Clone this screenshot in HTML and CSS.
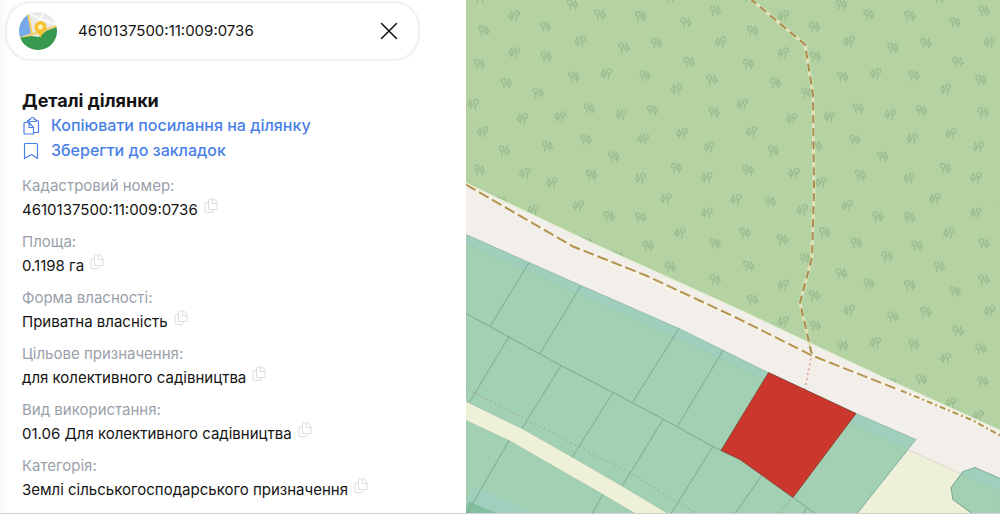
FILE: index.html
```html
<!DOCTYPE html>
<html lang="uk">
<head>
    <meta charset="UTF-8">
    <meta name="viewport" content="width=device-width, initial-scale=1.0">
    <title>Деталі ділянки</title>
    <link rel="stylesheet" href="styles.css">
</head>
<body>
    <svg class="sprite" aria-hidden="true">
        <symbol id="icon-copy" viewBox="0 0 14 16">
            <path d="M4.500 2.500v9h8.500v-6a4.500 4.500 0 0 0-4.500-4.500h-3a1 1 0 0 0-1 1.500M8.500 1v4.500h4.500M4.500 4.500h-2a1.500 1.500 0 0 0-1.500 1.500v7a1.500 1.500 0 0 0 1.500 1.500h5a1.500 1.500 0 0 0 1.500-1.500v-1.500"/>
        </symbol>
    </svg>

    <div class="page">
        <aside class="panel">
            <form class="search">
                <svg class="logo" viewBox="0 0 38 38" aria-hidden="true">
                    <clipPath id="logoClip"><circle cx="19" cy="19" r="19"/></clipPath>
                    <g clip-path="url(#logoClip)">
                        <rect width="38" height="38" fill="#e9e9e9"/>
                        <path d="M12 3l26 10M17 14L25 0" stroke="#fafafa" stroke-width="2"/>
                        <path d="M0 0h9l4 21-13 5z" fill="#76aae8"/>
                        <path d="M9 1l4 21M0 27l14-5 24-8" fill="none" stroke="#f5cf66" stroke-width="2"/>
                        <path d="M0 26l12-2 8 1 7-6 11-4v23H0z" fill="#36994d"/>
                        <path d="M21.500 26c-1-5-6-6-6-11a6 6 0 0 1 12 0c0 5-5 6-6 11z" fill="#f8c22e"/>
                        <circle cx="21.500" cy="15" r="2.500" fill="#fff2bf"/>
                    </g>
                </svg>
                <input class="search-input" type="text" aria-label="Кадастровий номер" value="4610137500:11:009:0736">
                <button class="clear" type="reset" aria-label="Очистити">
                    <svg viewBox="0 0 18 18"><path d="M1.500 1.500l15 15M16.500 1.500l-15 15"/></svg>
                </button>
            </form>

            <div class="details">
                <h1>Деталі ділянки</h1>
                <a class="action" href="#copy">
                    <svg viewBox="0 0 18 20"><path d="M7 3.500h1.500a2 2 0 0 1 4 0h1.500v2h-7zM7 4.500h-1.500v2M14 4.500h1.500a1 1 0 0 1 1 1v11h-5M3 6.500h4l4.500 5v6.500h-8.500a1 1 0 0 1-1-1v-9.500a1 1 0 0 1 1-1zM7 6.500v5h4.500"/></svg>
                    <span>Копіювати посилання на ділянку</span>
                </a>
                <a class="action" href="#save">
                    <svg viewBox="0 0 18 20"><path d="M3.500 2.500h11a1 1 0 0 1 1 1v14l-6-4-7 4v-14a1 1 0 0 1 1-1z"/></svg>
                    <span>Зберегти до закладок</span>
                </a>

                <dl class="fields">
                    <div>
                        <dt>Кадастровий номер:</dt>
                        <dd>4610137500:11:009:0736 <button class="copy" aria-label="Копіювати"><svg><use href="#icon-copy"/></svg></button></dd>
                    </div>
                    <div>
                        <dt>Площа:</dt>
                        <dd>0.1198 га <button class="copy" aria-label="Копіювати"><svg><use href="#icon-copy"/></svg></button></dd>
                    </div>
                    <div>
                        <dt>Форма власності:</dt>
                        <dd>Приватна власність <button class="copy" aria-label="Копіювати"><svg><use href="#icon-copy"/></svg></button></dd>
                    </div>
                    <div>
                        <dt>Цільове призначення:</dt>
                        <dd>для колективного садівництва <button class="copy" aria-label="Копіювати"><svg><use href="#icon-copy"/></svg></button></dd>
                    </div>
                    <div>
                        <dt>Вид використання:</dt>
                        <dd>01.06 Для колективного садівництва <button class="copy" aria-label="Копіювати"><svg><use href="#icon-copy"/></svg></button></dd>
                    </div>
                    <div>
                        <dt>Категорія:</dt>
                        <dd>Землі сільськогосподарського призначення <button class="copy" aria-label="Копіювати"><svg><use href="#icon-copy"/></svg></button></dd>
                    </div>
                </dl>
            </div>
        </aside>

        <main class="map">
            <svg viewBox="0 0 534 514" preserveAspectRatio="xMidYMid slice" role="img" aria-label="Кадастрова карта">
                <defs>
                    <g id="treeA">
                        <circle cx="-9" cy="-7" r="7"/>
                        <path d="M-8 0V16M7 -12l-7 16 7 3 8-3zM8 0v15"/>
                    </g>
                    <g id="treeB">
                        <circle cx="8" cy="-8" r="7"/>
                        <path d="M7 -1L5 17M-9 -12l-7 15 7 4 7-4zM-8 0v14"/>
                    </g>
                    <pattern id="trees" width="269" height="269" patternUnits="userSpaceOnUse" viewBox="0 0 807 807">
                        <g id="treeTile" class="trees"></g>
                    </pattern>
                </defs>

                <!-- land and forest -->
                <rect class="land" width="534" height="514"/>
                <path class="forest" d="M0 0H534V431L421 380 270 309 120 241 0 184z"/>
                <path fill="url(#trees)" d="M0 0H534V431L421 380 270 309 120 241 0 184z"/>
                <path class="forest-edge" d="M0 184L120 241 270 309 421 380 534 431"/>
                <path class="field" d="M444 451L534 492V514H391z"/>
                <path class="field-edge" d="M444 451L534 492"/>

                <!-- parcels -->
                <path class="strip" d="M0 235L63 263 115 286 213 329 302 373 390 414 450 440 391 514H0z"/>
                <path class="parcel" d="M0 244L63 272 213 340 296 379 389 426 442 450 391 514H0z"/>
                <path class="field" d="M0 402L56 429 107 458 157 487 202 514H169L137 495 43 441 0 421z"/>
                <path class="strip" d="M7 487L70 514H0V501z"/>
                <path class="parcel-dark" d="M3 502L32 514H0V508z"/>
                <path class="strip" d="M509 468L497 472 485 488 487 500 506 514H534V479z"/>
                <path class="parcel" d="M496 475L534 492V514H506L487 500 485 488z"/>

                <g class="lines">
                    <path d="M0 235L63 263 115 286 213 329 302 373 390 414 450 440 391 514" opacity=".6"/>
                    <path d="M0 314L24 327 42 337 95 366 147 393 198 420 247 447 255 451"/>
                    <path d="M0 402L56 429 107 458 157 487 202 514M0 421L43 441 137 495 169 514" opacity=".35"/>
                    <path d="M509 468L497 472 485 488 487 500 506 514M509 468L534 479"/>
                    <path d="M63 263L24 327M115 286L74 354M213 329L167 402M257 351L212 426"/>
                    <path d="M43 337L4 402M95 366L56 429M147 393L106 458M197 420L156 487M247 447L205 514"/>
                    <path d="M43 441L1 514M137 495L126 514M295 477L269 514M327 498L349 514M341 508L337 514"/>
                </g>
                <path class="dots" d="M2 390L60 420 163 473 230 514M324 501L312 514"/>
                <path class="selected" d="M302.500 373L390 414 327 498 274 460 255 451z"/>

                <!-- footpaths -->
                <path class="halo" d="M284 -1L339 45 347 95 348 190 346 258 334 303 346 356"/>
                <path class="path path-short" d="M284 -1L339 45 347 95 348 190 346 258 334 303 346 356"/>
                <path class="halo halo-light" d="M0 185L107 247 270 318 346 356 432 390 507 421 534 436"/>
                <path class="path" d="M0 185L107 247 180 276 270 318 346 356 432 390"/>
                <path class="path path-mixed" d="M435 391L507 421 534 436"/>
                <path class="dots dots-pink" d="M345 359L339 389"/>
            </svg>
        </main>
    </div>

    <script>
        // tree positions inside one repeating tile: [x, y, kind]
        const trees = [
            [42, -7, 'A'], [320, 15, 'A'], [613, -5, 'A'], [403, 46, 'A'], [525, 50, 'A'], [748, 34, 'A'],
            [145, 50, 'B'], [54, 94, 'A'], [239, 82, 'A'], [661, 69, 'A'], [343, 126, 'B'], [573, 131, 'A'],
            [764, 128, 'B'], [475, 145, 'A'], [145, 160, 'B'], [242, 172, 'A'], [41, 194, 'A'], [670, 188, 'A'],
            [422, 223, 'B'], [324, 232, 'A'], [538, 229, 'A'], [739, 241, 'A'], [122, 251, 'A'], [632, 270, 'B'],
            [217, 280, 'A'], [22, 315, 'B'], [371, 327, 'A'], [560, 333, 'A'], [466, 346, 'B'], [283, 352, 'B'],
            [745, 339, 'A'], [170, 358, 'B'], [50, 397, 'B'], [648, 403, 'B'], [361, 421, 'A'], [532, 418, 'B'],
            [245, 440, 'A'], [730, 443, 'B'], [116, 454, 'A'], [444, 471, 'A'], [41, 512, 'A'], [632, 506, 'A'],
            [177, 522, 'B'], [377, 527, 'A'], [523, 537, 'B'], [723, 535, 'B'], [258, 550, 'B'], [600, 598, 'B'],
            [337, 619, 'B'], [202, 632, 'B'], [3, 601, 'B'], [810, 601, 'B'], [107, 607, 'A'], [430, 651, 'A'],
            [525, 654, 'A'], [723, 641, 'B'], [642, 701, 'B'], [547, 739, 'A'], [748, 732, 'A'], [31, 701, 'A'],
            [143, 721, 'A'], [270, 699, 'A'], [365, 730, 'A'], [457, 771, 'A'], [211, 777, 'A'], [42, 800, 'A'],
            [613, 802, 'A']
        ];

        document.getElementById('treeTile').innerHTML = trees
            .map(([x, y, kind]) => `<use href="#tree${kind}" x="${x}" y="${y}"/>`)
            .join('');
    </script>
</body>
</html>
```
FILE: styles.css
```css
* {
    margin: 0;
    padding: 0;
    box-sizing: border-box;
}

body {
    font-family: Inter, "Liberation Sans", sans-serif;
    font-size: 15px;
    line-height: 24px;
    color: #141414;
    background-color: white;
}

button {
    background: none;
    border: none;
    cursor: pointer;
}

.sprite {
    display: none;
}

.page {
    display: flex;
    min-height: 100vh;
    border-bottom: 1px solid #cfcfcf;
}

.panel {
    flex: 0 0 466px;
    background: linear-gradient(to right, #f8f8f8, white 8px);
}

.search {
    display: flex;
    align-items: center;
    height: 56px;
    margin: 3px 48px 0 7px;
    padding: 0 20px 0 12px;
    background-color: white;
    border-radius: 24px;
    box-shadow: 0 0 3px 1px rgba(0, 0, 0, 0.12);
}

.logo {
    width: 38px;
    height: 38px;
}

.search-input {
    flex: 1;
    min-width: 0;
    margin-left: 21px;
    border: none;
    outline: none;
    background: none;
    font: inherit;
    color: inherit;
}

.clear {
    width: 18px;
    height: 18px;
}

.clear svg {
    display: block;
    fill: none;
    stroke: #111;
    stroke-width: 1.5;
    stroke-linecap: round;
}

.details {
    padding: 29px 22px 0;
}

h1 {
    font-size: 18px;
    font-weight: 700;
    line-height: 25px;
}

.action {
    display: flex;
    align-items: center;
    gap: 11px;
    font-size: 16px;
    font-weight: 500;
    line-height: 25px;
    color: #4a7fe8;
    text-decoration: none;
}

.action svg {
    width: 18px;
    height: 20px;
    fill: none;
    stroke: #4a7fe8;
    stroke-width: 1.2;
    stroke-linejoin: round;
}

.fields {
    display: grid;
    gap: 8px;
    margin-top: 11px;
}

dt {
    color: #9a9fab;
}

dd {
    display: flex;
    align-items: flex-start;
    gap: 6px;
}

.copy svg {
    display: block;
    width: 14px;
    height: 16px;
    fill: none;
    stroke: #dedede;
}

.map {
    position: relative;
    flex: 1;
    overflow: hidden;
}

/* the drawing fills whatever room the panel leaves */
.map svg {
    position: absolute;
    width: 100%;
    height: 100%;
}

.land {
    fill: #f2eeea;
}

.forest {
    fill: #b5d2a3;
}

.trees {
    fill: none;
    stroke: #9abd8d;
    stroke-width: 4;
}

.forest-edge {
    fill: none;
    stroke: #e9f0dc;
    stroke-width: 1.5;
}

.field {
    fill: #eef0d8;
}

.field-edge {
    stroke: #d9dccb;
}

.strip {
    fill: #a0cfbe;
}

.parcel {
    fill: #a1d0b3;
    stroke: #9bcaae;
    stroke-width: 1;
}

.parcel-dark {
    fill: #84bf9f;
}

.lines {
    fill: none;
    stroke: #76a48c;
    stroke-width: 0.9;
}

.selected {
    fill: #cb372d;
    stroke: #7d3f31;
    stroke-width: 0.8;
}

.halo {
    fill: none;
    stroke: #dfe4bb;
    stroke-width: 3;
}

.halo-light {
    stroke: #f8f3e6;
}

.path {
    fill: none;
    stroke: #b3944f;
    stroke-width: 2;
    stroke-dasharray: 11 4;
}

.path-short {
    stroke: #a98a4f;
    stroke-dasharray: 8 5;
}

.path-mixed {
    stroke-dasharray: 6 3 2 3;
}

.dots {
    fill: none;
    stroke: #a9b49b;
    stroke-width: 1.5;
    stroke-dasharray: 2 3;
}

.dots-pink {
    stroke: #e39a90;
}
```
